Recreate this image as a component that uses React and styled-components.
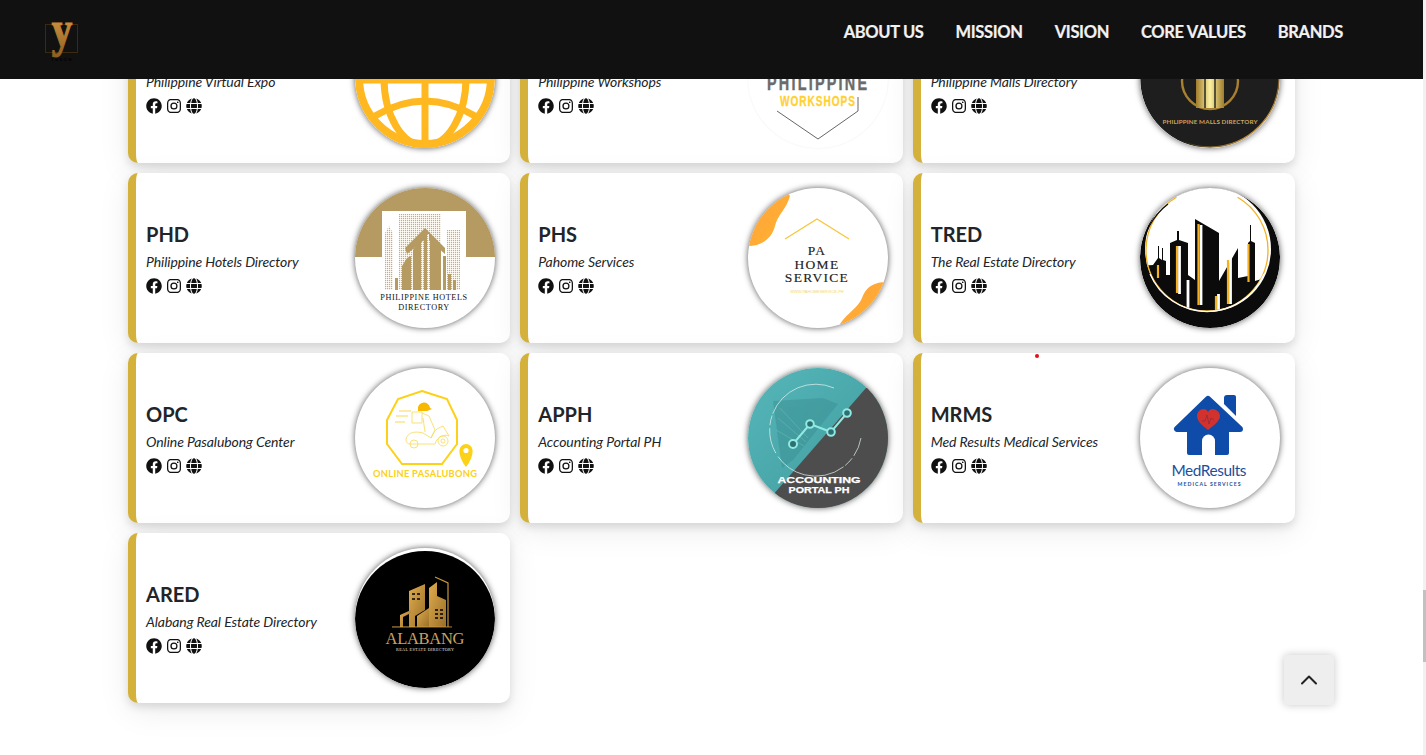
import React from "react";
import styled, { createGlobalStyle } from "styled-components";
import { FaFacebook, FaGlobe } from "react-icons/fa";
import { BsInstagram } from "react-icons/bs";
import { ChevronUp } from "lucide-react";

const GlobalStyle = createGlobalStyle`
  html, body { margin: 0; padding: 0; background: #fff; overflow: hidden; }
  body { font-family: "Lato", "Liberation Sans", sans-serif; color: #212529; }
`;

const Page = styled.div`
  display: flex;
  width: 1426px;
  height: 755px;
  overflow: hidden;
`;
const Viewport = styled.div`
  position: relative;
  flex: 1;
  min-width: 0;
  overflow: hidden;
`;
const Track = styled.div`
  width: 3px;
  padding-top: 590px;
  background: #f1f1f1;
`;
const Thumb = styled.div`
  height: 72px;
  background: #c1c1c1;
`;
const Header = styled.header`
  position: absolute;
  top: 0;
  left: 0;
  right: 0;
  z-index: 5;
  height: 79px;
  background: #111;
  display: flex;
  justify-content: space-between;
  align-items: flex-start;
  padding: 0 80px 0 42px;
  box-sizing: border-box;
`;
const Brand = styled.div`
  width: 40px;
  height: 66px;
`;
const Nav = styled.nav`
  display: flex;
  gap: 32px;
  padding-top: 22px;
`;
const NavLink = styled.a`
  font-size: 16.5px;
  line-height: 20px;
  font-weight: 700;
  letter-spacing: -0.34px;
  color: #f2f2f2;
  white-space: nowrap;
  -webkit-text-stroke: 0.2px #f2f2f2;
`;
const Grid = styled.main`
  display: grid;
  grid-template-columns: repeat(3, 1fr);
  gap: 10px;
  width: 1167px;
  margin: -7px auto 0;
`;
const Card = styled.article`
  display: flex;
  align-items: center;
  justify-content: space-between;
  height: 170px;
  box-sizing: border-box;
  padding: 0 15px 0 10px;
  background: #fff;
  border-left: 8px solid #d4b13a;
  border-radius: 10px;
  box-shadow: 0 4px 8px rgba(0, 0, 0, 0.12), 0 8px 32px rgba(0, 0, 0, 0.08);
`;
const Info = styled.div`
  display: flex;
  flex-direction: column;
`;
const Title = styled.h3`
  margin: 0 0 1px;
  font-size: 20px;
  line-height: 27px;
  font-weight: 700;
  color: #212529;
`;
const Subtitle = styled.p`
  margin: 3px 0 4px;
  font-size: 14px;
  line-height: 20px;
  font-style: italic;
  font-weight: 400;
  letter-spacing: -0.08px;
  color: #212529;
`;
const Socials = styled.div`
  display: flex;
  align-items: center;
  gap: 5px;
  color: #111;
  font-size: 16px;
  height: 20px;
`;
const LogoCircle = styled.div`
  flex: none;
  width: 140px;
  height: 140px;
  border-radius: 50%;
  overflow: hidden;
  background: #fff;
  box-shadow: ${(p) => (p.$faint ? "0 0 2px rgba(0,0,0,.08)" : "0 0 6px rgba(0,0,0,.65)")};
  svg { display: block; width: 140px; height: 140px; }
`;
const ToTop = styled.button`
  position: absolute;
  left: 1284px;
  top: 655px;
  width: 50px;
  height: 50px;
  display: flex;
  align-items: center;
  justify-content: center;
  border: 0;
  padding: 0;
  border-radius: 4px;
  background: #eee;
  color: #222;
  box-shadow: 0 0 8px rgba(0, 0, 0, 0.22);
`;
const RedDot = styled.span`
  position: absolute;
  left: 1035px;
  top: 354px;
  width: 4px;
  height: 4px;
  border-radius: 50%;
  background: #e0101a;
`;

const BrandLogo = () => (
  <svg viewBox="0 0 40 66" width="40" height="66">
    <defs>
      <linearGradient id="yGold" x1="0" y1="0" x2="0" y2="1">
        <stop offset="0" stopColor="#eaa94a" />
        <stop offset="1" stopColor="#8f5f22" />
      </linearGradient>
    </defs>
    <rect x="3.5" y="24.5" width="32" height="28" fill="none" stroke="#3a2a10" />
    <text transform="translate(20 46) scale(.82 1)" textAnchor="middle" fontFamily="Liberation Serif" fontWeight="700" fontSize="50" fill="url(#yGold)" stroke="url(#yGold)" strokeWidth="1.2">y</text>
    <text x="20" y="61" textAnchor="middle" fontFamily="Lato" fontWeight="700" fontSize="4" letterSpacing="1.6" fill="#000">YUSON</text>
  </svg>
);

const GlobeLogo = () => (
  <svg viewBox="0 0 140 140">
    <circle cx="70" cy="70" r="66" fill="#fff" stroke="#ffb81f" strokeWidth="8" />
    <g fill="none" stroke="#ffb81f" strokeWidth="7">
      <ellipse cx="70" cy="70" rx="41" ry="68" />
      <path d="M70 2V138M2 72H138" />
      <path d="M20 108Q70 78 120 108" />
      <path d="M20 32Q70 62 120 32" />
    </g>
  </svg>
);

const WorkshopsLogo = () => (
  <svg viewBox="0 0 140 140">
    <text transform="translate(19 82) scale(.72 1)" fontFamily="Liberation Sans" fontWeight="700" fontSize="20" textLength="139" lengthAdjust="spacing" fill="#6b6b6b" stroke="#6b6b6b" strokeWidth="0.4">PHILIPPINE</text>
    <text transform="translate(32 98) scale(.72 1)" fontFamily="Liberation Sans" fontWeight="700" fontSize="14" textLength="104" lengthAdjust="spacing" fill="#ffd133" stroke="#ffd133" strokeWidth="0.3">WORKSHOPS</text>
    <path d="M29 103L70 131L110 103V89" fill="none" stroke="#666" strokeWidth="1" />
  </svg>
);

const MallsLogo = () => (
  <svg viewBox="0 0 140 140">
    <defs>
      <linearGradient id="mallBar" x1="0" y1="0" x2="1" y2="0">
        <stop offset="0" stopColor="#a07c2c" />
        <stop offset="0.5" stopColor="#fbf09f" />
        <stop offset="1" stopColor="#a07c2c" />
      </linearGradient>
      <linearGradient id="mallEdge" x1="0" y1="0" x2="1" y2="1">
        <stop offset="0.62" stopColor="#1c1c1c" />
        <stop offset="0.85" stopColor="#b8893a" />
      </linearGradient>
    </defs>
    <circle cx="70" cy="70" r="69" fill="#1e1e1e" stroke="url(#mallEdge)" strokeWidth="1.5" />
    <circle cx="70" cy="73" r="28" fill="none" stroke="#a97f30" strokeWidth="2.4" />
    <rect x="56" y="30" width="28" height="70" fill="url(#mallBar)" />
    <path d="M65 30V100M75 30V100" stroke="#1e1e1e" strokeWidth="1.4" />
    <text x="70" y="116" textAnchor="middle" fontFamily="Lato" fontWeight="700" fontSize="6.3" textLength="95" fill="#c8a55f">PHILIPPINE MALLS DIRECTORY</text>
  </svg>
);

const HotelsLogo = () => (
  <svg viewBox="0 0 140 140">
    <defs>
      <pattern id="hotelDots" width="2" height="2" patternUnits="userSpaceOnUse">
        <rect width="1.2" height="1.2" fill="#b59a62" />
      </pattern>
    </defs>
    <rect width="140" height="69" fill="#b59a62" />
    <rect x="27" y="23" width="84" height="79" fill="#fff" />
    <path d="M30 102V45L34 38L38 45V102ZM44 102V26H86V102ZM92 102V42H105V102Z" fill="url(#hotelDots)" opacity="0.8" />
    <path d="M40 102V90H43V102ZM47 102V78L52 70L56 68V102ZM58 102V62L66 50V102ZM69 102V41L72 42V102ZM75 102V50L86 60V102ZM88 102V68H91V102ZM93 102V86H96V102ZM98 102V92H101V102Z" fill="#b59a62" />
    <path d="M50 60L70 40L90 60L90 66L74 52V46H69V52L52 66Z" fill="#b59a62" />
    <text x="69" y="111.500" textAnchor="middle" fontFamily="Liberation Serif" fontSize="8.2" letterSpacing="0.6" fill="#111">PHILIPPINE HOTELS</text>
    <text x="69" y="121.500" textAnchor="middle" fontFamily="Liberation Serif" fontSize="8.2" letterSpacing="0.6" fill="#111">DIRECTORY</text>
  </svg>
);

const HomeServiceLogo = () => (
  <svg viewBox="0 0 140 140">
    <defs>
      <linearGradient id="blobOrange" x1="0" y1="0" x2="1" y2="1">
        <stop offset="0" stopColor="#ff9f3e" />
        <stop offset="1" stopColor="#ffb52e" />
      </linearGradient>
    </defs>
    <path d="M0 58C14 58 24 50 27 38C30 26 38 22 42 8L36 0H0Z" fill="url(#blobOrange)" />
    <path d="M140 94C124 94 118 100 114 110C110 120 100 124 92 136L100 140H140Z" fill="url(#blobOrange)" />
    <path d="M37 51L69 31L101 51" fill="none" stroke="#f7c63c" strokeWidth="1.3" />
    <g fontFamily="Liberation Serif" fontSize="13.500" letterSpacing="1.3" fill="#222" stroke="#222" strokeWidth="0.15" textAnchor="middle">
      <text x="69" y="67">PA</text>
      <text x="69" y="81">HOME</text>
      <text x="69" y="94">SERVICE</text>
    </g>
    <text x="69" y="105" textAnchor="middle" fontFamily="Liberation Sans" fontSize="4" fill="#f5d76e">WWW.PAHOMESERVICE.PH</text>
  </svg>
);

const RealEstateLogo = () => (
  <svg viewBox="0 0 140 140">
    <defs>
      <clipPath id="tredInner">
        <circle cx="67" cy="62" r="61" />
      </clipPath>
    </defs>
    <circle cx="70" cy="70" r="70" fill="#0b0b0b" />
    <circle cx="68" cy="61" r="63" fill="#fff" />
    <g clipPath="url(#tredInner)">
      <path d="M0 140V78L13 77L18 70V58H19V70L22 72V60H23V72L26 73V87L30 87V55L37 52V43H39V52L48 55V87L55 92V31L79 45V93L98 60V90L108 88V55L110 53V37H111V53L115 55V93L125 90V140Z" fill="#0b0b0b" />
      <path d="M61 37V117M39.500 58V106M90.500 70V116M48 92V120M78.500 106V122" stroke="#fff" strokeWidth="2.800" fill="none" />
      <path d="M58.500 36V117M37 58V105M108.500 56V94M88 72V116M18 77V90M76 108V122" stroke="#f4b223" strokeWidth="2.200" fill="none" />
    </g>
    <circle cx="67" cy="62" r="61" fill="none" stroke="#f4b223" strokeWidth="1.300" strokeDasharray="319 64" strokeDashoffset="-319" />
    <path d="M10 86A62 62 0 0 0 124 86" fill="none" stroke="#fff" strokeWidth="1.200" />
    <path d="M28 16A66 66 0 0 0 2 66" fill="none" stroke="#0b0b0b" strokeWidth="1.200" />
  </svg>
);

const PasalubongLogo = () => (
  <svg viewBox="0 0 140 140">
    <path d="M67 23L92 31L102 52L102 76L87 96H47L32 76L32 52L43 31Z" fill="none" stroke="#fcd116" strokeWidth="2" />
    <g fill="none" stroke="#f7d955" strokeWidth="0.8">
      <path d="M51 71C53 64 60 63 68 65L76 70C80 60 84 60 88 58L94 68C90 66 82 68 80 76H56C52 76 51 74 51 71Z" />
      <circle cx="59" cy="76" r="4" />
      <circle cx="88" cy="73" r="5" />
      <circle cx="88" cy="73" r="2" />
      <path d="M57 44H67V55H57Z" />
      <path d="M67 45L74 48L80 62L76 70M68 50L70 64" />
      <path d="M44 43H56M41 48H53M40 54H50" strokeWidth="1" />
    </g>
    <path d="M63 41A6 6 0 0 1 75 40L77 41L72 43H63Z" fill="#f6b900" />
    <path d="M111 76A6.600 6.600 0 0 1 117.600 82.500Q118 90 111 99Q104 90 104.400 82.500A6.600 6.600 0 0 1 111 76Z" fill="#fcd116" />
    <circle cx="111" cy="82.500" r="2.600" fill="#fff" />
    <text x="70" y="109" textAnchor="middle" fontFamily="Lato" fontWeight="700" fontSize="9.300" textLength="104" fill="#fcd116">ONLINE PASALUBONG</text>
  </svg>
);

const AccountingLogo = () => (
  <svg viewBox="0 0 140 140">
    <defs>
      <linearGradient id="teal" x1="0" y1="0" x2="1" y2="1">
        <stop offset="0" stopColor="#55b6b8" />
        <stop offset="1" stopColor="#3f9a9e" />
      </linearGradient>
    </defs>
    <rect width="140" height="140" fill="url(#teal)" />
    <path d="M25 33L75 30L90 36L45 92L34 100Z" fill="#327f82" opacity="0.3" />
    <path d="M32 40L60 70M30 50L58 74M28 62L56 78" stroke="#7ec6c6" strokeWidth="0.5" opacity="0.7" />
    <path d="M118 20L24 128L70 150L150 150L150 20Z" fill="#4d4d4d" />
    <path d="M86 20A46 46 0 1 0 113 70" fill="none" stroke="#e8f4f4" strokeWidth="0.7" strokeDasharray="74 2 10 3 26 4" />
    <path d="M45 76L62 56L83 64L99 45" fill="none" stroke="#8eeae2" strokeWidth="2" />
    <g fill="#2f6f72" stroke="#8eeae2" strokeWidth="2">
      <circle cx="45" cy="76" r="4" />
      <circle cx="62" cy="56" r="3.800" />
      <circle cx="83" cy="64" r="3.800" />
      <circle cx="99" cy="45" r="3.800" />
    </g>
    <g fontFamily="Liberation Sans" fontWeight="700" fontSize="8.500" fill="#fff" stroke="#fff" strokeWidth="0.25" textAnchor="middle">
      <text x="71" y="115" textLength="83" lengthAdjust="spacingAndGlyphs">ACCOUNTING</text>
      <text x="71" y="125" textLength="61" lengthAdjust="spacingAndGlyphs">PORTAL PH</text>
    </g>
  </svg>
);

const MedResultsLogo = () => (
  <svg viewBox="0 0 140 140">
    <path d="M84 30Q84 27 87 27H94Q96 27 96 29V48L84 36Z" fill="#0f4ba8" />
    <path d="M68 31L37 61H100Z" fill="#0f4ba8" stroke="#0f4ba8" strokeWidth="6" strokeLinejoin="round" />
    <rect x="47" y="55" width="42" height="32" rx="2" fill="#0f4ba8" />
    <path d="M62 87V73A6.500 6.500 0 0 1 75 73V87Z" fill="#fff" />
    <path d="M68 62C60 56 57 52 57 48C57 44 60 41 63.500 41Q66.500 41 68 44Q69.500 41 72.500 41C76 41 80 44 80 48C80 52 76 56 68 62Z" fill="#d2322d" />
    <path d="M62 53L65 53L67 47L69 56L71 50L74 52" fill="none" stroke="#8c2a40" strokeWidth="0.7" />
    <text x="69" y="108" textAnchor="middle" fontFamily="Lato" fontWeight="400" fontSize="15.400" textLength="75" fill="#1c4f9c">MedResults</text>
    <text x="69" y="118" textAnchor="middle" fontFamily="Lato" fontWeight="700" fontSize="5.200" textLength="63" fill="#1c4f9c">MEDICAL SERVICES</text>
  </svg>
);

const AlabangLogo = () => (
  <svg viewBox="0 0 140 140">
    <defs>
      <linearGradient id="aredGold" x1="0" y1="0" x2="1" y2="1">
        <stop offset="0" stopColor="#e0ac4e" />
        <stop offset="1" stopColor="#9a6f28" />
      </linearGradient>
    </defs>
    <ellipse cx="70" cy="71.500" rx="70" ry="68.500" fill="#000" />
    <g fill="url(#aredGold)">
      <path d="M54 79V43L70 36V62L60 68V79Z" />
      <path d="M74 79V40L82 34V48L91 52V79Z" />
      <path d="M62 79V68L74 60V79Z" />
      <path d="M45 79V67L56 62V65L48 69V79Z" />
      <rect x="37" y="78.500" width="60" height="1" />
    </g>
    <path d="M80 29L93 35V79" fill="none" stroke="#c8963c" strokeWidth="1.200" />
    <path d="M57 46H60M62 46H65M57 51H60M62 51H65M80 62H83M85 62H88M80 66H83M85 66H88M80 70H83M85 70H88" stroke="#000" strokeWidth="1.600" />
    <text x="70" y="96" textAnchor="middle" fontFamily="Liberation Serif" fontSize="16.500" textLength="79" fill="#c9a063">ALABANG</text>
    <text x="70" y="103" textAnchor="middle" fontFamily="Liberation Serif" fontSize="4.200" textLength="58" fill="#e6e6e6">REAL ESTATE DIRECTORY</text>
  </svg>
);

const brands = [
  { code: "PVE", name: "Philippine Virtual Expo", Logo: GlobeLogo },
  { code: "PW", name: "Philippine Workshops", Logo: WorkshopsLogo, faint: true },
  { code: "PMD", name: "Philippine Malls Directory", Logo: MallsLogo },
  { code: "PHD", name: "Philippine Hotels Directory", Logo: HotelsLogo },
  { code: "PHS", name: "Pahome Services", Logo: HomeServiceLogo },
  { code: "TRED", name: "The Real Estate Directory", Logo: RealEstateLogo },
  { code: "OPC", name: "Online Pasalubong Center", Logo: PasalubongLogo },
  { code: "APPH", name: "Accounting Portal PH", Logo: AccountingLogo },
  { code: "MRMS", name: "Med Results Medical Services", Logo: MedResultsLogo },
  { code: "ARED", name: "Alabang Real Estate Directory", Logo: AlabangLogo },
];

const links = ["ABOUT US", "MISSION", "VISION", "CORE VALUES", "BRANDS"];

export default function App() {
  return (
    <Page>
      <GlobalStyle />
      <Viewport>
        <Header>
          <Brand>
            <BrandLogo />
          </Brand>
          <Nav>
            {links.map((link) => (
              <NavLink key={link}>{link}</NavLink>
            ))}
          </Nav>
        </Header>
        <Grid>
          {brands.map(({ code, name, Logo, faint }) => (
            <Card key={code}>
              <Info>
                <Title>{code}</Title>
                <Subtitle>{name}</Subtitle>
                <Socials>
                  <FaFacebook />
                  <BsInstagram size={14} />
                  <FaGlobe />
                </Socials>
              </Info>
              <LogoCircle $faint={faint}>
                <Logo />
              </LogoCircle>
            </Card>
          ))}
        </Grid>
        <RedDot />
        <ToTop aria-label="Back to top">
          <ChevronUp size={28} strokeWidth={1.7} />
        </ToTop>
      </Viewport>
      <Track>
        <Thumb />
      </Track>
    </Page>
  );
}
